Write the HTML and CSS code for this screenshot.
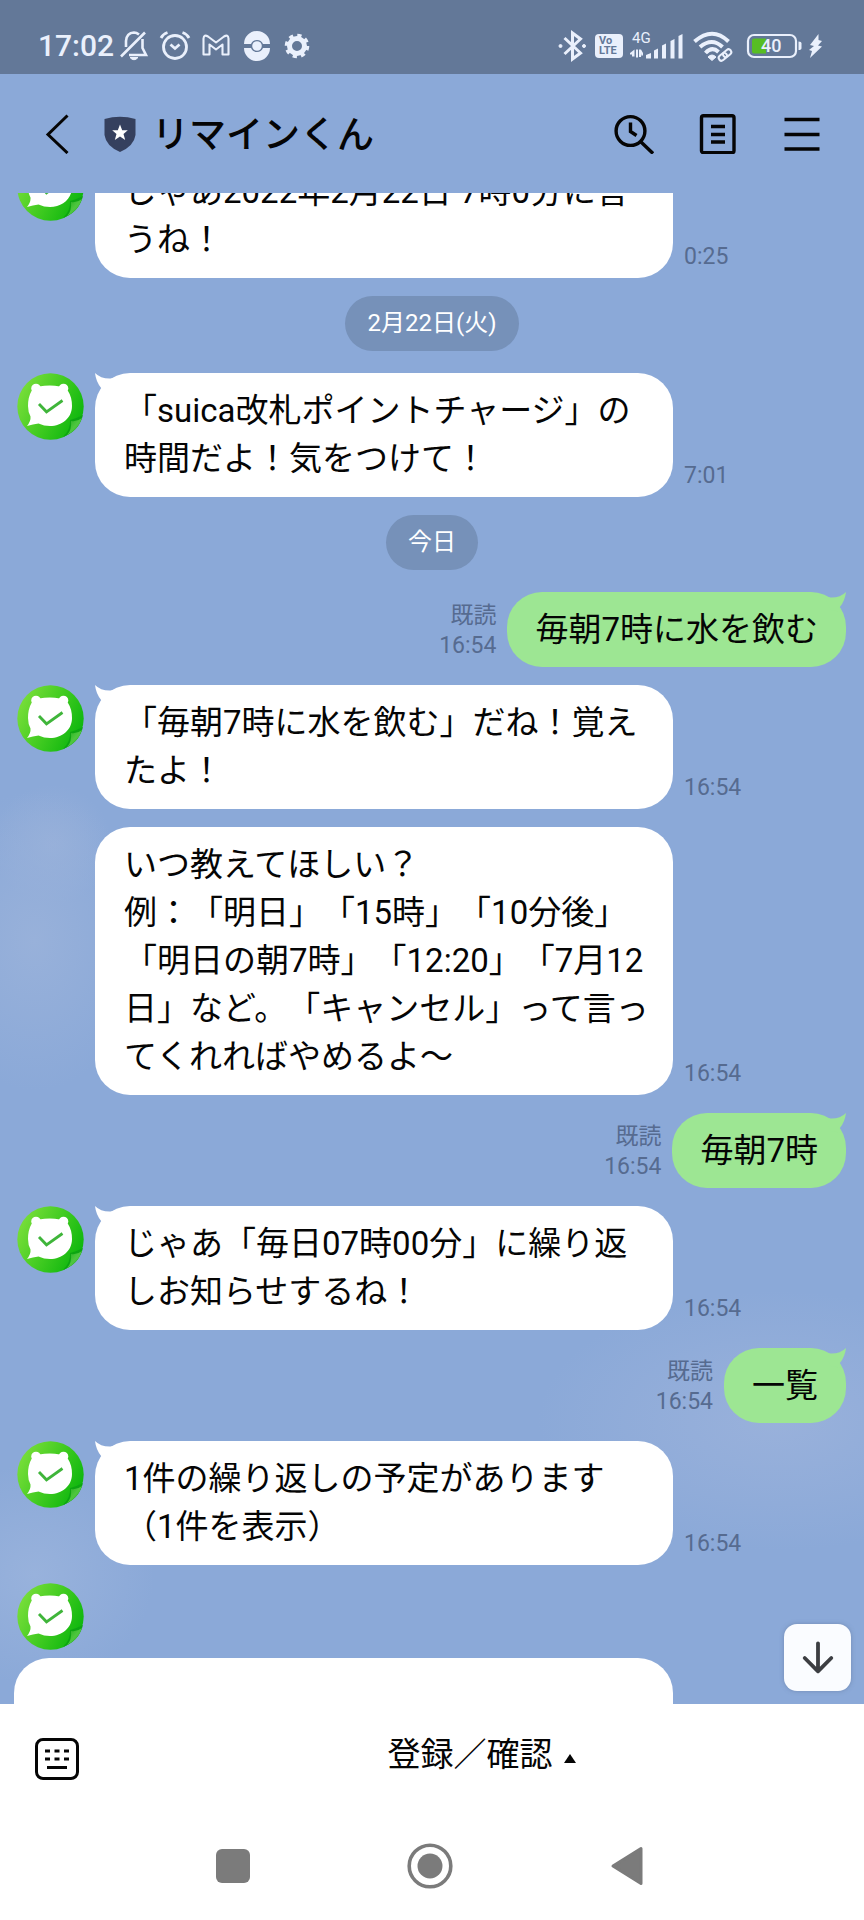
FILE: index.html
```html
<!DOCTYPE html>
<html lang="ja">
<head>
<meta charset="utf-8">
<meta name="viewport" content="width=device-width, initial-scale=1">
<title>リマインくん</title>
<link rel="stylesheet" href="styles.css">
</head>
<body>
<svg class="defs" aria-hidden="true">
  <defs>
    <linearGradient id="leaf" x1="0" y1="0.2" x2="1" y2="0.7">
      <stop offset="0" stop-color="#7ee03c"/>
      <stop offset="0.5" stop-color="#44cc22"/>
      <stop offset="1" stop-color="#0ab50c"/>
    </linearGradient>
    <linearGradient id="fold" x1="0" y1="0" x2="1" y2="1">
      <stop offset="0" stop-color="#1fae1b"/>
      <stop offset="0.5" stop-color="#4fc63f"/>
      <stop offset="1" stop-color="#2fb52a"/>
    </linearGradient>
  </defs>
  <symbol id="bear" viewBox="0 0 67 67">
    <circle cx="33.500" cy="33.500" r="33.200" fill="url(#leaf)"/>
    <path d="M66 42 Q58 46 53 47 Q54 56 46 64 Q62 58 66 42Z" fill="#0da512"/>
    <path d="M65 45 Q60 49 54 48 Q55 57 50 62 Q61 57 65 45Z" fill="url(#fold)"/>
    <circle cx="19" cy="15.500" r="4.800" fill="#fff"/>
    <circle cx="46.500" cy="15.500" r="4.800" fill="#fff"/>
    <path d="M22 13.500 Q33 11.500 43 13.500 L51 18 Q55 24 55 33 C55 45 45 53 33 53 Q27 53 21.500 50.500 Q16 51 10 53 Q14 48 13.500 43.500 Q11 39 11 33 Q11 24 14.500 18Z" fill="#fff"/>
    <path d="M22 31 L29.500 38.800 L45.500 27.500" fill="none" stroke="#3fb53a" stroke-width="2.800"/>
  </symbol>
  <symbol id="tail" viewBox="0 0 20 20">
    <path d="M0 0 Q6 6 16 5.500 L22 4 L15 18 L4 20 L6.500 15.500 Q1 9 0 0Z" fill="currentColor"/>
  </symbol>
</svg>

<div class="app">
  <div class="status">
    <div class="status-left">
      <span class="clock">17:02</span>
      <span class="notices">
        <svg width="32" height="36" viewBox="0 0 32 36" fill="none" stroke="currentColor" stroke-width="2.600"><path d="M21 6.500 Q18.500 4.500 16 4.500 Q8.500 5 8 13 V19 M24.500 11 V20 L28 27 H11 M3 28.500 L27 4.500"/><path d="M12 29.500 H20 Q16 34 12 29.500Z" fill="currentColor" stroke-width="1"/></svg>
        <svg width="32" height="36" viewBox="0 0 32 36" fill="none" stroke="currentColor" stroke-width="2.800"><circle cx="16" cy="19" r="11.500"/><path d="M2 10 Q4 6 8.500 4.500 M30 10 Q28 6 23.500 4.500 M11.500 16.500 L16 20.500 L20.500 16.500"/></svg>
        <svg width="32" height="36" viewBox="0 0 32 36" fill="none" stroke="currentColor" stroke-width="2.100" stroke-linejoin="round"><path d="M3.500 26.500 V10.500 Q4 6 8 8.500 L16 14.500 L24 8.500 Q28 6 28.500 10.500 V26.500 H22.500 V16.500 L16 21.500 L9.500 16.500 V26.500Z"/></svg>
        <svg width="32" height="36" viewBox="0 0 32 36"><path d="M3 16 A13 13 0 0 1 29 16 H22 A6.500 6.500 0 0 0 10 16Z M3 20 A13 13 0 0 0 29 20 H22 A6.500 6.500 0 0 1 10 20Z" fill="currentColor"/><circle cx="16" cy="18" r="4.800" fill="currentColor"/></svg>
        <svg width="32" height="36" viewBox="0 0 32 36" fill="none" stroke="currentColor"><circle cx="15" cy="18" r="7.500" stroke-width="5"/><circle cx="15" cy="18" r="10.700" stroke-width="3.200" stroke-dasharray="4.200"/></svg>
      </span>
    </div>
    <div class="status-right">
      <svg width="30" height="36" viewBox="0 0 30 36" fill="none" stroke="currentColor" stroke-width="3"><path d="M6.500 10 L22.500 25 L14.500 31 V5 L22.500 11 L6.500 26"/><circle cx="2.500" cy="18" r="1.500" fill="currentColor" stroke-width="1"/><circle cx="26" cy="18" r="1.500" fill="currentColor" stroke-width="1"/></svg>
      <span class="volte"><span>Vo</span><span>LTE</span></span>
      <svg width="54" height="36" viewBox="0 0 54 36" fill="currentColor"><text x="2" y="15" class="net">4G</text><path d="M16 27 l5 -2 v5.500 h-5z M24 22.500 l4 -2 v10 h-4z M32 17.500 l4 -2 v15 h-4z M40.500 13 l4 -2 v19.500 h-4z M48.500 8 l4 -2 v24.500 h-4z"/><path d="M4.500 21.500 V28.500 H2 V26.500 H0 V25 Z M6 21.500 H8 V29.500 H6Z M9 21.500 H11 L13 25 V27.500 H11.500 V25 L11 29 H9Z"/></svg>
      <svg width="44" height="36" viewBox="0 0 44 36" fill="none" stroke="currentColor" stroke-width="4"><path d="M3.500 13.500 Q21.500 -2 37.500 13.500 M9 19 Q21 9 31.500 19 M14.500 25 Q21 18 27.500 24"/><path d="M17 29 Q21 25 25 29 L21 32.500Z" fill="currentColor" stroke-width="1"/><g stroke-width="2"><rect x="27.500" y="26" width="9" height="5.500" rx="2.700" transform="rotate(-40 32 29)"/><rect x="31.500" y="22.500" width="9" height="5.500" rx="2.700" transform="rotate(-40 36 25)"/></g></svg>
      <svg width="60" height="36" viewBox="0 0 60 36"><rect x="6" y="7" width="48" height="22" rx="6" fill="none" stroke="currentColor" stroke-width="2.200"/><path d="M12 10.500 H24 V25.500 H12 Q10 25.500 10 23.500 V12.500 Q10 10.500 12 10.500Z" fill="#57bd23"/><path d="M56.500 13.500 q3 0 3 2 v4.500 q0 2 -3 2z" fill="currentColor"/><text x="19" y="24" class="charge" fill="currentColor">40</text></svg>
      <svg width="13" height="36" viewBox="0 0 13 36"><path d="M9.500 6 L1 17 L5 18 L0 22 L3 23 L1 30 L13 18.500 L9 17.500 L13 13 L9.500 12Z" fill="currentColor"/></svg>
    </div>
  </div>

  <header class="header">
    <button class="icon-button" aria-label="戻る"><svg width="40" height="40" viewBox="0 0 40 40" fill="none" stroke="currentColor" stroke-width="3"><path d="M29.500 1.500 L10 20.500 L29.500 39"/></svg></button>
    <svg class="shield" width="32" height="36" viewBox="0 0 32 36" aria-hidden="true"><path d="M0.500 3 Q16 -1.500 31.500 3 V19 Q30 30 16 36 Q2 30 0.500 19Z" fill="#35405e"/><path d="M16 8.500 L18.200 14.200 L23.800 14.300 L19.500 18 L21.200 24 L16 20.600 L10.800 24 L12.500 18 L8.200 14.300 L13.800 14.200Z" fill="#fff"/></svg>
    <h1 class="title">リマインくん</h1>
    <nav class="tools">
      <button class="icon-button" aria-label="検索"><svg width="40" height="40" viewBox="0 0 40 40" fill="none" stroke="currentColor" stroke-width="3.400"><circle cx="16.500" cy="17" r="14.400"/><path d="M26.500 27.500 L39 39.500 M16.500 8.500 V17.500 L22.500 21.500"/></svg></button>
      <button class="icon-button" aria-label="ノート"><svg width="40" height="40" viewBox="0 0 40 40" fill="none" stroke="currentColor" stroke-width="3.400"><rect x="3.500" y="1.700" width="32.500" height="37" rx="2"/><path d="M13 12.500 H27 M13 20.500 H27 M13 28 H27"/></svg></button>
      <button class="icon-button" aria-label="メニュー"><svg width="40" height="40" viewBox="0 0 40 40" fill="none" stroke="currentColor" stroke-width="3.400"><path d="M2.500 5.500 H37.500 M2.500 20.500 H37.500 M2.500 35 H37.500"/></svg></button>
    </nav>
  </header>

  <main class="chat">
    <div class="messages">
      <div class="row">
        <svg class="avatar"><use href="#bear"/></svg>
        <p class="bubble wide">じゃあ2022年2月22日 7時0分に言<br>うね！<svg class="tail"><use href="#tail"/></svg></p>
        <span class="meta">0:25</span>
      </div>
      <div class="date">2月22日(火)</div>
      <div class="row">
        <svg class="avatar"><use href="#bear"/></svg>
        <p class="bubble wide">「suica改札ポイントチャージ」の<br>時間だよ！気をつけて！<svg class="tail"><use href="#tail"/></svg></p>
        <span class="meta">7:01</span>
      </div>
      <div class="date">今日</div>
      <div class="row mine">
        <span class="meta">既読<br>16:54</span>
        <p class="bubble">毎朝7時に水を飲む<svg class="tail"><use href="#tail"/></svg></p>
      </div>
      <div class="row">
        <svg class="avatar"><use href="#bear"/></svg>
        <p class="bubble wide">「毎朝7時に水を飲む」だね！覚え<br>たよ！<svg class="tail"><use href="#tail"/></svg></p>
        <span class="meta">16:54</span>
      </div>
      <div class="row">
        <span class="avatar"></span>
        <p class="bubble wide">いつ教えてほしい？<br>例：「明日」「15時」「10分後」<br>「明日の朝7時」「12:20」「7月12<br>日」など。「キャンセル」って言っ<br>てくれればやめるよ〜</p>
        <span class="meta">16:54</span>
      </div>
      <div class="row mine">
        <span class="meta">既読<br>16:54</span>
        <p class="bubble">毎朝7時<svg class="tail"><use href="#tail"/></svg></p>
      </div>
      <div class="row">
        <svg class="avatar"><use href="#bear"/></svg>
        <p class="bubble wide">じゃあ「毎日07時00分」に繰り返<br>しお知らせするね！<svg class="tail"><use href="#tail"/></svg></p>
        <span class="meta">16:54</span>
      </div>
      <div class="row mine">
        <span class="meta">既読<br>16:54</span>
        <p class="bubble">一覧<svg class="tail"><use href="#tail"/></svg></p>
      </div>
      <div class="row">
        <svg class="avatar"><use href="#bear"/></svg>
        <p class="bubble wide">1件の繰り返しの予定があります<br>（1件を表示）<svg class="tail"><use href="#tail"/></svg></p>
        <span class="meta">16:54</span>
      </div>
      <div class="card-message">
        <svg class="avatar"><use href="#bear"/></svg>
        <div class="card"></div>
      </div>
    </div>
    <button class="to-latest" aria-label="最新のメッセージへ"><svg width="40" height="40" viewBox="0 0 40 40" fill="none" stroke="currentColor" stroke-width="4" stroke-linecap="round" stroke-linejoin="round"><path d="M20 4.500 V34 M6 20 L20 34 L34 20"/></svg></button>
  </main>

  <footer class="menu-bar">
    <button class="icon-button keyboard" aria-label="キーボード"><svg width="44" height="42" viewBox="0 0 44 42" fill="none" stroke="currentColor" stroke-width="3"><rect x="1.500" y="1.500" width="41" height="39" rx="6.500"/><path d="M10 13 h5 M19.500 13 h5 M29 13 h5 M10 21 h5 M19.500 21 h5 M29 21 h5 M12 29.500 H32"/></svg></button>
    <button class="menu-toggle">登録／確認<svg width="12" height="9" viewBox="0 0 12 9" aria-hidden="true"><path d="M6 0 L12 9 H0Z" fill="currentColor"/></svg></button>
  </footer>

  <nav class="system-nav">
    <button class="icon-button" aria-label="最近使ったアプリ"><svg width="48" height="48" viewBox="0 0 48 48"><rect x="7" y="7" width="34" height="34" rx="6" fill="currentColor"/></svg></button>
    <button class="icon-button" aria-label="ホーム"><svg width="48" height="48" viewBox="0 0 48 48"><circle cx="24" cy="24" r="20.800" fill="none" stroke="currentColor" stroke-width="3.600"/><circle cx="24" cy="24" r="12.500" fill="currentColor"/></svg></button>
    <button class="icon-button" aria-label="戻る"><svg width="48" height="48" viewBox="0 0 48 48"><path d="M10 24 L38 6.500 V41.500Z" fill="currentColor" stroke="currentColor" stroke-width="3" stroke-linejoin="round"/></svg></button>
  </nav>
</div>
</body>
</html>
```
FILE: styles.css
```css
* {
  box-sizing: border-box;
}

body {
  margin: 0;
  font-family: Roboto, "Noto Sans CJK JP", sans-serif;
  color: #050505;
  text-spacing-trim: space-all;
}

button {
  border: 0;
  padding: 0;
  background: none;
  color: inherit;
  font: inherit;
  cursor: pointer;
}

svg {
  display: block;
  flex: none;
}

.defs {
  position: absolute;
  width: 0;
  height: 0;
}

.app {
  display: flex;
  flex-direction: column;
  height: 100vh;
  background:
    radial-gradient(ellipse 110px 150px at 4% 49%, #98b1da 0%, #98b1da00 100%),
    radial-gradient(ellipse 60px 60px at 6% 44%, #97b0da 0%, #97b0da00 100%),
    radial-gradient(ellipse 240px 130px at 90% 74%, #99b1db 0%, #99b1db00 100%),
    radial-gradient(ellipse 120px 110px at 4% 82%, #98b2dc 0%, #98b2dc00 100%),
    #8ba9d8;
}

.status {
  display: flex;
  justify-content: space-between;
  align-items: center;
  height: 74px;
  padding: 18px 42px 0 38px;
  background: #637898;
  color: #eaf0fc;
}

.status-left,
.notices,
.status-right {
  display: flex;
  align-items: center;
}

.status-left {
  gap: 4px;
}

.notices {
  gap: 9px;
}

.status-right {
  gap: 7px;
}

.clock {
  font-size: 30px;
  font-weight: 500;
  line-height: 36px;
}

.volte {
  display: flex;
  flex-direction: column;
  width: 28px;
  padding: 2px 4px;
  border-radius: 4px;
  background: #eaf0fc;
  color: #637898;
  font-size: 11px;
  font-weight: 700;
  line-height: 10px;
}

.net {
  font-size: 15px;
}

.charge {
  font-size: 18px;
  font-weight: 500;
}

.header {
  display: flex;
  align-items: center;
  height: 119px;
  padding: 0 42px 0 38px;
}

.shield {
  margin: 0 16px 0 26px;
}

.title {
  margin: 0;
  padding-top: 4px;
  font-size: 37px;
  font-weight: 500;
  line-height: 48px;
}

.tools {
  display: flex;
  gap: 44px;
  margin-left: auto;
}

.chat {
  position: relative;
  flex: 1 1 0;
  min-height: 0;
  overflow: hidden;
}

.messages {
  display: flex;
  flex-direction: column;
  gap: 18px;
  margin-top: -39px;
}

.row {
  display: flex;
  gap: 11px;
  padding: 0 18px 0 17px;
}

.mine {
  justify-content: flex-end;
}

.avatar {
  flex: none;
  width: 67px;
  height: 67px;
}

.bubble {
  position: relative;
  margin: 0;
  padding: 14px 28px 14px 29px;
  border-radius: 35px;
  background: #fff;
  font-size: 33px;
  line-height: 48px;
}

.wide {
  flex: 0 1 578px;
  padding-right: 20px;
}

.mine .bubble {
  padding: 14px 28px 13px;
  background: #9de693;
}

.tail {
  position: absolute;
  top: 0;
  left: 0;
  width: 20px;
  height: 20px;
  color: #fff;
}

.mine .tail {
  right: 0;
  left: auto;
  color: #9de693;
  transform: scaleX(-1);
}

.meta {
  align-self: flex-end;
  padding-bottom: 6px;
  color: #566b90;
  font-size: 23px;
  line-height: 30px;
}

.mine .meta {
  text-align: right;
}

.date {
  align-self: center;
  margin-bottom: 4px;
  padding: 0 22px;
  border-radius: 28px;
  background: #7691b9;
  color: #fff;
  font-size: 24px;
  line-height: 55px;
}

.card-message {
  display: flex;
  flex-direction: column;
  gap: 8px;
  padding-left: 14px;
}

.card-message .avatar {
  margin-left: 3px;
}

.card {
  width: 100%;
  max-width: 659px;
  height: 124px;
  border-radius: 35px;
  background: #fff;
}

.to-latest {
  position: absolute;
  right: 13px;
  bottom: 13px;
  display: grid;
  place-items: center;
  width: 67px;
  height: 67px;
  border-radius: 13px;
  background: #fafcff;
  box-shadow: 0 0 4px #5a6e9080;
  color: #3c3e42;
}

.to-latest svg {
  width: 38px;
  height: 38px;
}

.menu-bar {
  display: flex;
  align-items: center;
  height: 108px;
  background: #fff;
}

.keyboard {
  padding: 2px 20px 0 35px;
}

.menu-toggle {
  display: flex;
  flex: 1;
  justify-content: center;
  align-items: center;
  gap: 11px;
  padding-bottom: 6px;
  font-size: 33px;
  line-height: 48px;
}

.menu-toggle svg {
  margin-top: 6px;
}

.system-nav {
  display: flex;
  justify-content: center;
  align-items: center;
  gap: 149px;
  height: 108px;
  padding-right: 5px;
  background: #fff;
  color: #7b7b7b;
}
```
